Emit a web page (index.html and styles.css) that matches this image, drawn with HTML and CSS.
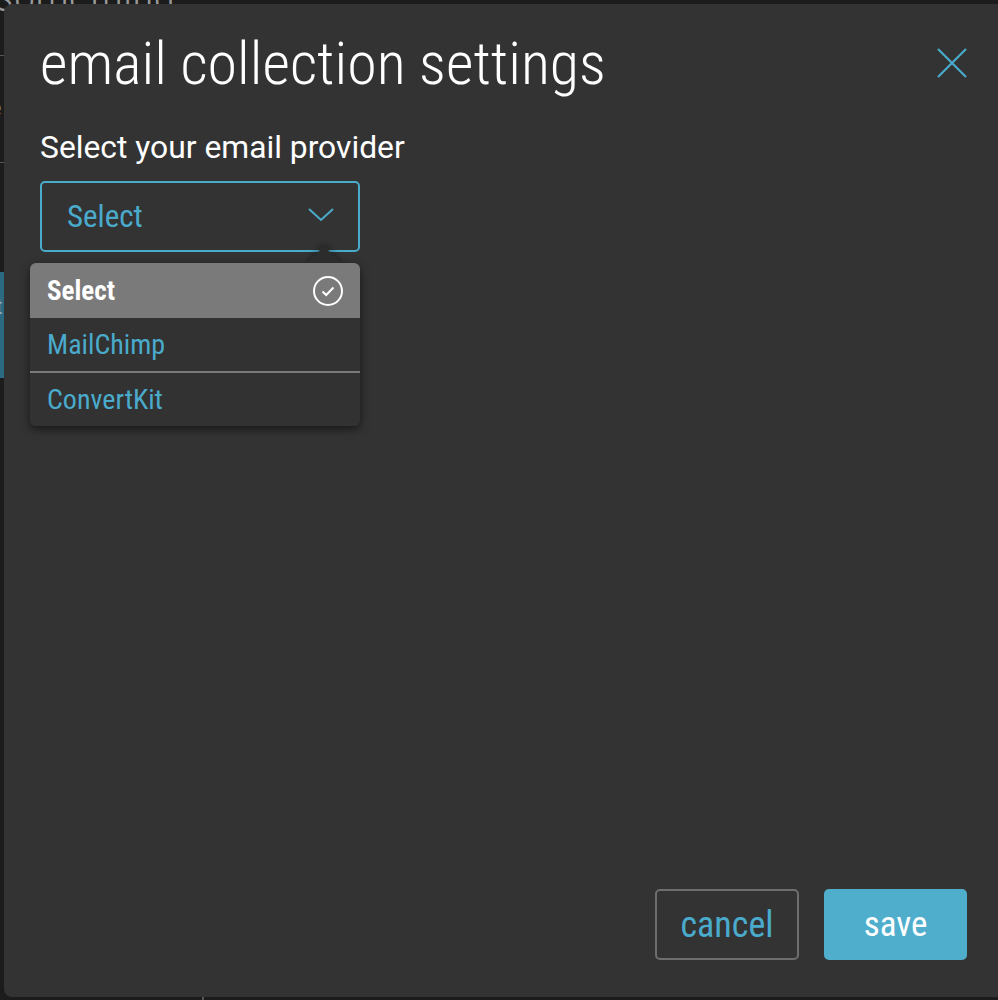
FILE: index.html
```html
<!DOCTYPE html>
<html>
<head>
<meta charset="utf-8">
<link rel="stylesheet" href="styles.css">
</head>
<body>
<div class="backdrop">
  <div class="bg-text">something</div>
  <div class="bg-line bg-line-1"></div>
  <div class="bg-letter">e</div>
  <div class="bg-line bg-line-2"></div>
  <div class="bg-tab">t</div>
  <div class="bg-vline"></div>
</div>
<div class="modal">
  <div class="modal-head">
    <h1 class="title">email collection settings</h1>
    <button class="close" aria-label="close">
      <svg width="30" height="30" viewBox="0 0 30 30"><path d="M1 1 L29 29 M29 1 L1 29" stroke="#4aabcc" stroke-width="2.2" fill="none"/></svg>
    </button>
  </div>
  <div class="field-label">Select your email provider</div>
  <div class="select-wrap">
    <div class="select">
      <span class="select-value">Select</span>
      <svg class="chevron" width="26" height="14" viewBox="0 0 26 14"><path d="M1 1 L13 12 L25 1" stroke="#4aabcc" stroke-width="2" fill="none"/></svg>
    </div>
    <div class="menu">
      <div class="menu-arrow"></div>
      <div class="menu-item selected">
        <span>Select</span>
        <svg width="32" height="32" viewBox="0 0 32 32"><circle cx="16" cy="16" r="14" stroke="#fff" stroke-width="2" fill="none"/><path d="M10.5 16.5 L14.2 20 L21.5 12.5" stroke="#fff" stroke-width="2" fill="none"/></svg>
      </div>
      <div class="menu-item">MailChimp</div>
      <div class="menu-item">ConvertKit</div>
    </div>
  </div>
  <div class="spacer"></div>
  <div class="footer">
    <button class="btn btn-cancel">cancel</button>
    <button class="btn btn-save">save</button>
  </div>
</div>
</body>
</html>
```
FILE: styles.css
```css
html, body {
  margin: 0;
  padding: 0;
  width: 998px;
  height: 1000px;
  overflow: hidden;
  background: #1c1c1c;
  font-family: Roboto, "Liberation Sans", sans-serif;
  font-stretch: 75%;
}
.backdrop {
  position: absolute;
  inset: 0;
}
.bg-text {
  position: absolute;
  left: -6px;
  top: -30px;
  font-size: 44px;
  font-weight: 300;
  color: #9a9a9a;
}
.bg-line {
  position: absolute;
  left: 0;
  width: 6px;
  height: 1px;
  background: #555;
}
.bg-line-1 { top: 55px; }
.bg-line-2 { top: 162px; }
.bg-letter {
  position: absolute;
  left: -8px;
  top: 96px;
  font-size: 20px;
  color: #888;
}
.bg-tab {
  position: absolute;
  left: 0;
  top: 272px;
  width: 6px;
  height: 106px;
  background: #2b6a80;
  color: #9ab;
  font-size: 22px;
  line-height: 70px;
  text-indent: -4px;
  overflow: hidden;
}
.bg-vline {
  position: absolute;
  left: 202px;
  top: 996px;
  width: 2px;
  height: 4px;
  background: #555;
}
.modal {
  position: absolute;
  left: 4px;
  top: 4px;
  right: -10px;
  bottom: 3px;
  background: #333333;
  border-radius: 8px;
  padding: 0 41px 37px 36px;
  display: flex;
  flex-direction: column;
  box-sizing: border-box;
}
.modal-head {
  display: flex;
  justify-content: space-between;
  align-items: flex-start;
}
.title {
  margin: 24px 0 0 0;
  font-size: 60px;
  font-weight: 300;
  color: #ffffff;
  line-height: 72px;
  letter-spacing: 0;
}
.close {
  background: none;
  border: 0;
  padding: 0;
  margin: 44px 0 0 0;
  cursor: pointer;
  display: block;
}
.close svg { display: block; }
.field-label {
  margin-top: 27px;
  font-size: 31.8px;
  font-stretch: 100%;
  font-weight: 400;
  color: #ffffff;
  line-height: 40px;
}
.select-wrap {
  position: relative;
  margin-top: 14px;
  width: 320px;
}
.select {
  box-sizing: border-box;
  height: 71px;
  border: 2px solid #4aabcc;
  border-radius: 5px;
  display: flex;
  align-items: center;
  justify-content: space-between;
  padding: 0 24px 0 25px;
}
.select-value {
  font-size: 31px;
  color: #4aabcc;
}
.chevron { display: block; margin-top: -4px; }
.menu {
  position: absolute;
  left: -10px;
  top: 82px;
  width: 330px;
  background: #323232;
  border-radius: 6px;
  box-shadow: 0 3px 10px rgba(0,0,0,0.55);
}
.menu-arrow {
  position: absolute;
  right: 24px;
  top: -12px;
  width: 24px;
  height: 24px;
  background: #2c2c2c;
  transform: rotate(45deg);
  box-shadow: -2px -2px 6px rgba(0,0,0,0.3);
}
.menu-item {
  position: relative;
  height: 53px;
  display: flex;
  align-items: center;
  justify-content: space-between;
  padding: 0 16px 0 17px;
  font-size: 28px;
  color: #4aabcc;
  background: #323232;
}
.menu-item + .menu-item { border-top: 2px solid #7a7a7a; }
.menu-item.selected + .menu-item { border-top: 0; }
.menu-item:last-child { border-radius: 0 0 6px 6px; height: 53px; }
.menu-item.selected {
  height: 55px;
  background: #7a7a7a;
  color: #ffffff;
  font-weight: 700;
  font-size: 27px;
  border-radius: 6px 6px 0 0;
}
.menu-item.selected svg { display: block; }
.spacer { flex: 1; }
.footer {
  display: flex;
  justify-content: flex-end;
  gap: 25px;
}
.btn {
  box-sizing: border-box;
  height: 71px;
  border-radius: 5px;
  font-family: Roboto, "Liberation Sans", sans-serif;
  font-stretch: 75%;
  font-size: 36px;
  cursor: pointer;
}
.btn-cancel {
  width: 144px;
  background: transparent;
  border: 2px solid #6e6e6e;
  color: #4aabcc;
}
.btn-save {
  width: 143px;
  background: #50aecd;
  border: 0;
  color: #ffffff;
  font-size: 35px;
}
```
